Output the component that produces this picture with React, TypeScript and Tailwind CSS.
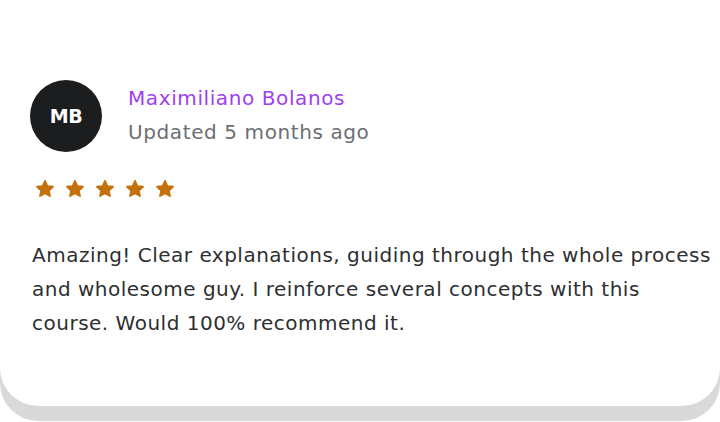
import React from 'react'

const review = {
  initials: 'MB',
  name: 'Maximiliano Bolanos',
  updated: 'Updated 5 months ago',
  rating: 5,
  lines: [
    'Amazing! Clear explanations, guiding through the whole process',
    'and wholesome guy. I reinforce several concepts with this',
    'course. Would 100% recommend it.',
  ],
}

function Star() {
  return (
    <svg width="22" height="22" viewBox="0 0 24 24" className="text-[#c4710d]">
      <path
        fill="currentColor"
        stroke="currentColor"
        strokeWidth="2"
        strokeLinejoin="round"
        d="M12 3.2l2.6 5.6 6.1.7-4.5 4.2 1.2 6-5.4-3.1-5.4 3.1 1.2-6-4.5-4.2 6.1-.7z"
      />
    </svg>
  )
}

export default function App() {
  return (
    <div
      className="w-[720px] h-[422px] bg-white overflow-hidden"
      style={{ fontFamily: '"DejaVu Sans", sans-serif' }}>
      <div className="w-[720px] h-[406px] bg-white rounded-b-[38px] shadow-[0_15px_0_#d9d9d9] pl-[30px] pt-[80px]">
        <div className="flex items-center gap-[26px]">
          <div className="w-[72px] h-[72px] rounded-full bg-[#1c1d1f] flex items-center justify-center text-white text-[19px] font-bold tracking-tight">
            {review.initials}
          </div>
          <div className="flex flex-col -mt-[3px] text-[20px] leading-[34px] tracking-[0.6px]">
            <span className="text-[#9d3ff0]">{review.name}</span>
            <span className="text-[#6a6f73]">{review.updated}</span>
          </div>
        </div>

        <div className="flex gap-[8px] mt-[26px] ml-[4px]">
          {Array.from({ length: review.rating }).map((_, i) => (
            <Star key={i} />
          ))}
        </div>

        <p className="mt-[38px] ml-[2px] text-[20px] leading-[34px] tracking-[0.5px] text-[#2d2f31] whitespace-nowrap">
          {review.lines.map((line) => (
            <span key={line} className="block">
              {line}
            </span>
          ))}
        </p>
      </div>
    </div>
  )
}
